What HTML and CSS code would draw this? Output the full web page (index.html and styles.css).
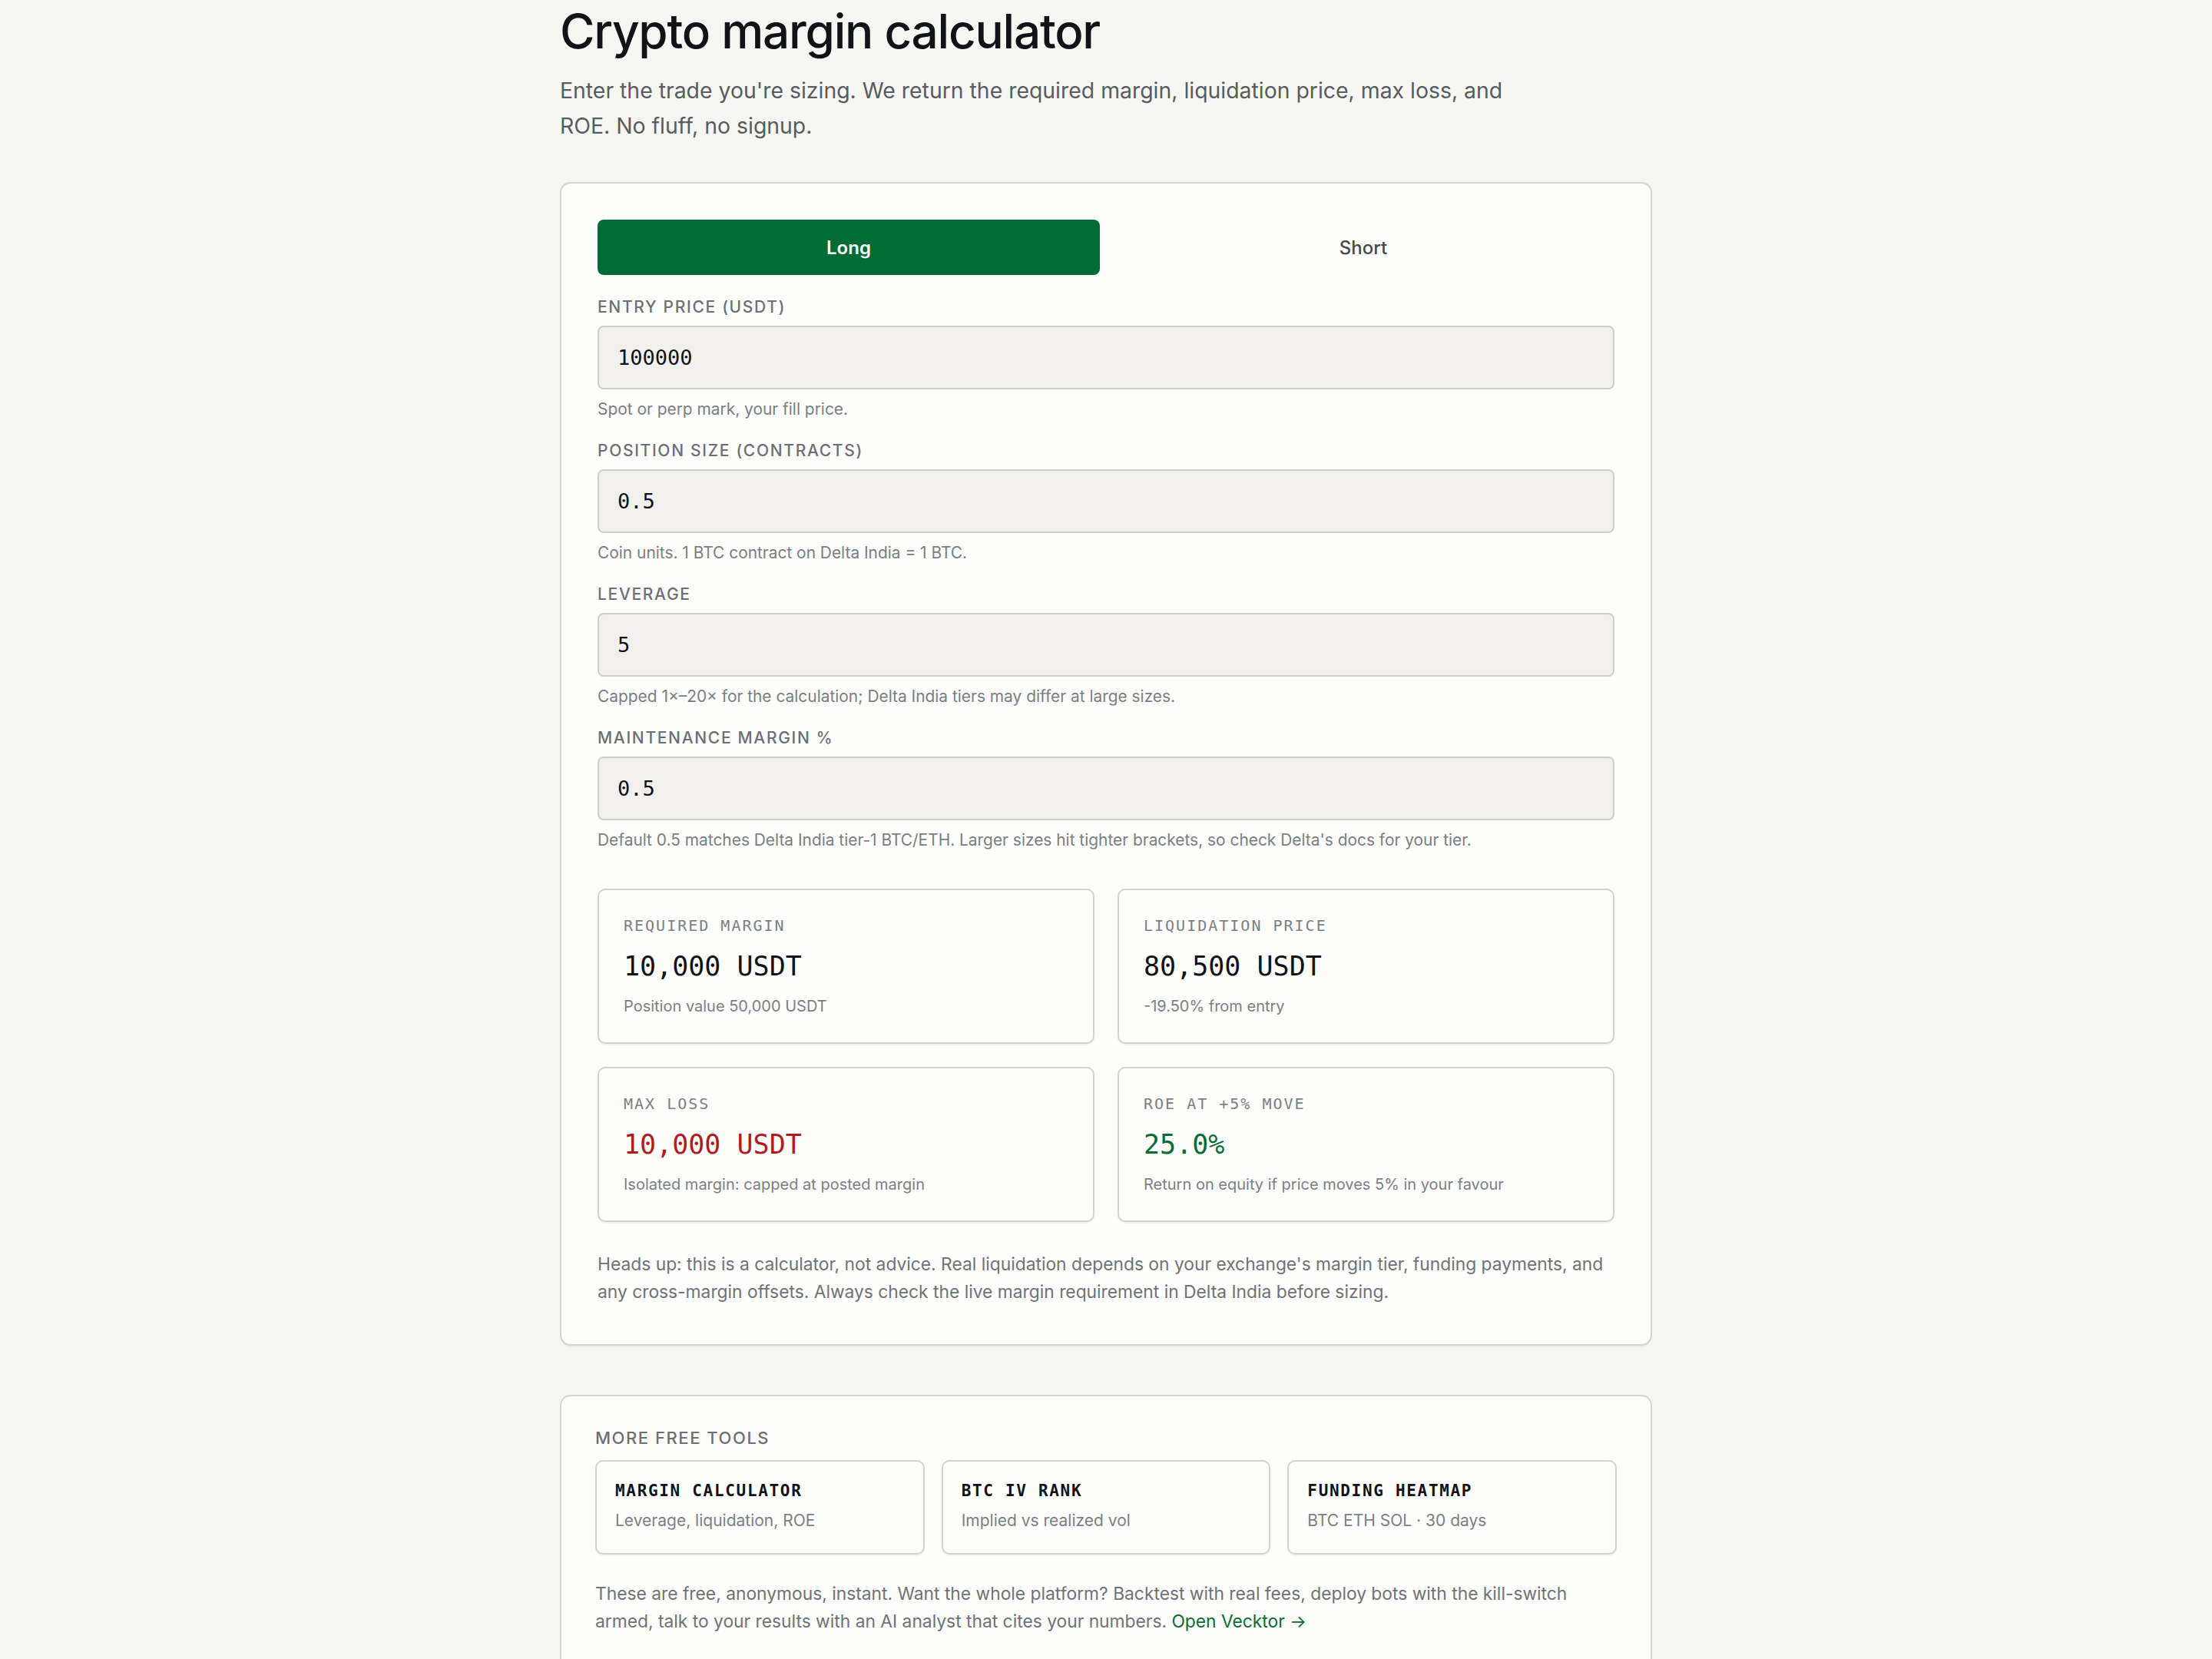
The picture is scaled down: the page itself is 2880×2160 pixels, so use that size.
FILE: index.html
```html
<!DOCTYPE html>
<html lang="en">
<head>
    <meta charset="UTF-8">
    <title>Crypto margin calculator</title>
    <link rel="stylesheet" href="styles.css">
</head>
<body>
    <main class="page">
        <h1 class="title">Crypto margin calculator</h1>
        <p class="lede">Enter the trade you're sizing. We return the required margin, liquidation price, max loss, and ROE. No fluff, no signup.</p>

        <section class="panel calc">
            <div class="side-toggle">
                <button class="side active" type="button">Long</button>
                <button class="side" type="button">Short</button>
            </div>

            <div class="field">
                <label for="entry-price">Entry price (USDT)</label>
                <input id="entry-price" type="text" value="100000">
                <p class="hint">Spot or perp mark, your fill price.</p>
            </div>
            <div class="field">
                <label for="position-size">Position size (contracts)</label>
                <input id="position-size" type="text" value="0.5">
                <p class="hint">Coin units. 1 BTC contract on Delta India = 1 BTC.</p>
            </div>
            <div class="field">
                <label for="leverage">Leverage</label>
                <input id="leverage" type="text" value="5">
                <p class="hint">Capped 1×–20× for the calculation; Delta India tiers may differ at large sizes.</p>
            </div>
            <div class="field">
                <label for="maint-margin">Maintenance margin %</label>
                <input id="maint-margin" type="text" value="0.5">
                <p class="hint">Default 0.5 matches Delta India tier-1 BTC/ETH. Larger sizes hit tighter brackets, so check Delta's docs for your tier.</p>
            </div>

            <div class="results">
                <div class="stat">
                    <div class="stat-label">Required margin</div>
                    <div class="stat-value">10,000 USDT</div>
                    <div class="stat-note">Position value 50,000 USDT</div>
                </div>
                <div class="stat">
                    <div class="stat-label">Liquidation price</div>
                    <div class="stat-value">80,500 USDT</div>
                    <div class="stat-note">-19.50% from entry</div>
                </div>
                <div class="stat">
                    <div class="stat-label">Max loss</div>
                    <div class="stat-value loss">10,000 USDT</div>
                    <div class="stat-note">Isolated margin: capped at posted margin</div>
                </div>
                <div class="stat">
                    <div class="stat-label">ROE at +5% move</div>
                    <div class="stat-value gain">25.0%</div>
                    <div class="stat-note">Return on equity if price moves 5% in your favour</div>
                </div>
            </div>

            <p class="note">Heads up: this is a calculator, not advice. Real liquidation depends on your exchange's margin tier, funding payments, and any cross-margin offsets. Always check the live margin requirement in Delta India before sizing.</p>
        </section>

        <section class="panel tools">
            <h2 class="section-label">More free tools</h2>
            <div class="tool-grid">
                <a class="tool" href="#">
                    <span class="tool-name">Margin calculator</span>
                    <span class="tool-desc">Leverage, liquidation, ROE</span>
                </a>
                <a class="tool" href="#">
                    <span class="tool-name">BTC IV rank</span>
                    <span class="tool-desc">Implied vs realized vol</span>
                </a>
                <a class="tool" href="#">
                    <span class="tool-name">Funding heatmap</span>
                    <span class="tool-desc">BTC ETH SOL · 30 days</span>
                </a>
            </div>
            <p class="note">These are free, anonymous, instant. Want the whole platform? Backtest with real fees, deploy bots with the kill-switch armed, talk to your results with an AI analyst that cites your numbers. <a class="cta" href="#">Open Vecktor →</a></p>
        </section>
    </main>
</body>
</html>
```

FILE: styles.css
```css
body {
    margin: 0;
    background-color: #f6f6f2;
    color: #111317;
    font-family: Inter, "Noto Sans", sans-serif;
}

.page {
    max-width: 1422px;
    margin: 0 auto;
    padding: 5px 0 120px;
}

.title {
    margin: 0 0 19px;
    font-size: 62px;
    line-height: 71px;
    font-weight: 500;
    letter-spacing: -0.02em;
}

.lede {
    max-width: 1260px;
    margin: 0 0 50px;
    font-size: 28.4px;
    line-height: 46px;
    color: #595c60;
}

.panel {
    background: #fdfdfb;
    border: 2px solid #d6d5d1;
    border-radius: 14px;
    box-shadow: 0 2px 0 rgba(0, 0, 0, 0.04);
}

.calc {
    padding: 47px 47px 50px;
}

/* long / short switch */
.side-toggle {
    display: grid;
    grid-template-columns: 1fr 1fr;
    gap: 16px;
    margin-bottom: 28px;
}

.side {
    height: 72px;
    border: none;
    border-radius: 8px;
    background: transparent;
    color: #45484c;
    font-family: Inter, "Noto Sans", sans-serif;
    font-size: 24px;
    font-weight: 500;
    cursor: pointer;
}

.side.active {
    background: #016b36;
    color: #fff;
    font-weight: 600;
}

.field + .field {
    margin-top: 26px;
}

.field label {
    display: block;
    margin-bottom: 10px;
    font-size: 21px;
    line-height: 28px;
    font-weight: 500;
    letter-spacing: 0.08em;
    text-transform: uppercase;
    color: #6c6f73;
}

.field input {
    display: block;
    width: 100%;
    height: 83px;
    box-sizing: border-box;
    padding: 0 24px;
    background: #f1f0ed;
    border: 2px solid #cfcecb;
    border-radius: 8px;
    color: #111317;
    font-family: "DejaVu Sans Mono", "Liberation Mono", monospace;
    font-size: 27px;
    outline: none;
}

.hint {
    margin: 11px 0 0;
    font-size: 20.9px;
    line-height: 29px;
    color: #7b7e82;
}

/* result cards */
.results {
    display: grid;
    grid-template-columns: 1fr 1fr;
    gap: 30px;
    margin-top: 49px;
}

.stat {
    padding: 33px 32px;
    background: #fdfdfc;
    border: 2px solid #d3d2ce;
    border-radius: 10px;
    box-shadow: 0 2px 0 rgba(0, 0, 0, 0.04);
}

.stat-label {
    font-family: "DejaVu Sans Mono", "Liberation Mono", monospace;
    font-size: 20px;
    line-height: 26px;
    letter-spacing: 0.1em;
    text-transform: uppercase;
    color: #7c7f83;
}

.stat-value {
    margin-top: 19px;
    font-family: "DejaVu Sans Mono", "Liberation Mono", monospace;
    font-size: 35px;
    line-height: 42px;
    color: #111317;
}

.stat-value.loss {
    color: #b01c1e;
}

.stat-value.gain {
    color: #0b6b35;
}

.stat-note {
    margin-top: 17px;
    font-size: 20px;
    line-height: 28px;
    color: #7c7f83;
}

.note {
    margin: 37px 0 0;
    font-size: 22.8px;
    line-height: 36px;
    color: #6f7276;
}

/* other tools */
.tools {
    margin-top: 64px;
    padding: 40px 44px 48px;
}

.section-label {
    margin: 0 0 15px;
    font-size: 22px;
    line-height: 28px;
    font-weight: 500;
    letter-spacing: 0.07em;
    text-transform: uppercase;
    color: #6c6f73;
}

.tool-grid {
    display: grid;
    grid-template-columns: repeat(3, 1fr);
    gap: 22px;
}

.tool {
    display: block;
    padding: 25px 24px 28px;
    border: 2px solid #d3d2ce;
    border-radius: 10px;
    box-shadow: 0 2px 0 rgba(0, 0, 0, 0.04);
    text-decoration: none;
}

.tool-name {
    display: block;
    font-family: "DejaVu Sans Mono", "Liberation Mono", monospace;
    font-size: 21px;
    line-height: 26px;
    font-weight: 700;
    letter-spacing: 0.08em;
    text-transform: uppercase;
    color: #111317;
}

.tool-desc {
    display: block;
    margin-top: 12px;
    font-size: 21px;
    line-height: 28px;
    color: #7c7f83;
}

.tools .note {
    margin-top: 33px;
}

.cta {
    color: #0b6b35;
    text-decoration: none;
}
```
